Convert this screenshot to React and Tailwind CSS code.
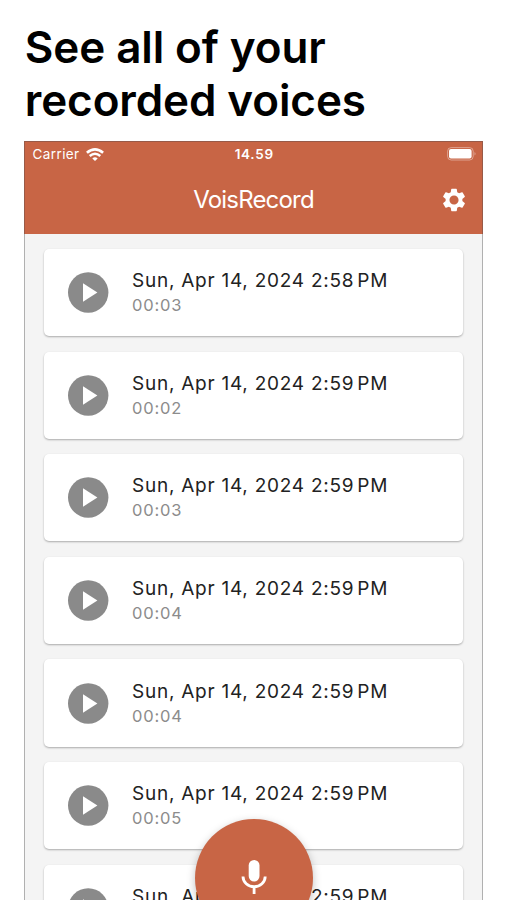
import React from "react";

const recordings = [
  { minute: "2:58", length: "00:03" },
  { minute: "2:59", length: "00:02" },
  { minute: "2:59", length: "00:03" },
  { minute: "2:59", length: "00:04" },
  { minute: "2:59", length: "00:04" },
  { minute: "2:59", length: "00:05" },
  { minute: "2:59", length: "00:04" },
];

function WifiIcon() {
  return (
    <svg className="h-[13px] w-[18px]" viewBox="0 0 18 13" fill="none" stroke="white">
      <path d="M0.9 4.8Q9-2 17.1 4.8" strokeWidth="2.7" />
      <path d="M3.7 8Q9 3.5 14.3 8" strokeWidth="2.5" />
      <path d="M9 13 6.3 10.4Q9 8 11.7 10.4Z" fill="white" stroke="none" />
    </svg>
  );
}

function BatteryIcon() {
  return (
    <svg className="h-[14px] w-[29px]" viewBox="0 0 29 14">
      <rect x="0.6" y="0.6" width="25.6" height="12.4" rx="3.6" fill="none" stroke="white" strokeOpacity="0.4" />
      <rect x="2" y="2" width="22.6" height="9.4" rx="2" fill="white" />
      <path d="M27.5 5Q28.6 5.5 28.6 6.8T27.5 8.6Z" fill="white" fillOpacity="0.4" />
    </svg>
  );
}

function GearIcon() {
  return (
    <svg className="size-7" viewBox="0 0 24 24" fill="white">
      <path d="M19.14 12.94c.04-.3.06-.61.06-.94 0-.32-.02-.64-.07-.94l2.03-1.58c.18-.14.23-.41.12-.61l-1.92-3.32c-.12-.22-.37-.29-.59-.22l-2.39.96c-.5-.38-1.03-.7-1.62-.94l-.36-2.54c-.04-.24-.24-.41-.48-.41h-3.84c-.24 0-.43.17-.47.41l-.36 2.54c-.59.24-1.13.57-1.62.94l-2.39-.96c-.22-.08-.47 0-.59.22L2.74 8.87c-.12.21-.08.47.12.61l2.03 1.58c-.05.3-.09.63-.09.94s.02.64.07.94l-2.03 1.58c-.18.14-.23.41-.12.61l1.92 3.32c.12.22.37.29.59.22l2.39-.96c.5.38 1.03.7 1.62.94l.36 2.54c.05.24.24.41.48.41h3.84c.24 0 .44-.17.47-.41l.36-2.54c.59-.24 1.13-.56 1.62-.94l2.39.96c.22.08.47 0 .59-.22l1.92-3.32c.12-.22.07-.47-.12-.61l-2.01-1.58zM12 15.9c-2.15 0-3.9-1.75-3.9-3.9s1.75-3.9 3.9-3.9 3.9 1.75 3.9 3.9-1.75 3.9-3.9 3.9z" />
    </svg>
  );
}

function RecordingCard({ minute, length }) {
  return (
    <li className="flex h-[87.3px] shrink-0 items-center rounded-[5px] bg-white pl-[23.5px] shadow-[0_1px_2px_rgba(0,0,0,0.3)]">
      <svg className="size-[41px] shrink-0" viewBox="0 0 41 41">
        <circle cx="20.2" cy="20.5" r="20.2" fill="#8a8a8a" />
        <path d="M15 11.2v18.6l14.4-9.3z" fill="white" />
      </svg>
      <div className="ml-[23.5px] whitespace-nowrap">
        <div className="text-[19px] leading-[25px] tracking-[0.75px] text-[#222222]">
          Sun, Apr 14, 2024 {minute}
          <span className="ml-[3px]">PM</span>
        </div>
        <div className="text-[16.5px] leading-[24px] tracking-[0.8px] text-[#8c8c8c]">{length}</div>
      </div>
    </li>
  );
}

export default function App() {
  return (
    <main className="flex h-[900px] w-[507px] flex-col overflow-hidden bg-white px-[24px] pt-[21px] font-['Inter',sans-serif]">
      <h1 className="whitespace-nowrap pl-[0.8px] text-[44px] font-semibold leading-[53px] tracking-[-0.1px] text-black">
        See all of your
        <br />
        recorded voices
      </h1>
      <section className="relative mt-[14px] flex h-[772px] shrink-0 flex-col border border-b-0 border-[#b0b0b0] bg-[#f4f4f4]">
        <header className="-mx-px -mt-px h-[93px] shrink-0 border border-b-0 border-[#985a48] bg-[#c86545] text-white">
          <div className="grid h-[24px] grid-cols-3 items-center pl-[7.5px] pr-[6px] text-[13.5px]">
            <div className="flex items-center gap-[6px] tracking-[0.4px]">
              Carrier
              <WifiIcon />
            </div>
            <div className="text-center font-semibold tracking-[0.7px]">14.59</div>
            <div className="flex justify-end">
              <BatteryIcon />
            </div>
          </div>
          <div className="grid h-[67px] grid-cols-[48px_1fr_48px] items-center">
            <span />
            <h2 className="pt-px text-center text-[24px] tracking-[-0.8px]">VoisRecord</h2>
            <button className="flex justify-end pr-[14px]" aria-label="Settings">
              <GearIcon />
            </button>
          </div>
        </header>
        <ul className="flex min-h-0 flex-1 flex-col gap-[15.3px] overflow-hidden px-[19px] pt-[15px]">
          {recordings.map((item, i) => (
            <RecordingCard key={i} {...item} />
          ))}
        </ul>
        <button
          className="absolute left-[170px] top-[677px] flex size-[118px] items-center justify-center rounded-full bg-[#c86545] shadow-[0_3px_8px_rgba(0,0,0,0.25)]"
          aria-label="Record"
        >
          <svg className="mb-[2px] h-[35px] w-[26px]" viewBox="0 0 26 35">
            <rect x="7.7" y="0" width="10.8" height="21.5" rx="5.4" fill="white" />
            <path d="M2 16.5a11.1 10.2 0 0 0 22.2 0M13.1 26.7V34" fill="none" stroke="white" strokeWidth="2.8" />
          </svg>
        </button>
      </section>
    </main>
  );
}
